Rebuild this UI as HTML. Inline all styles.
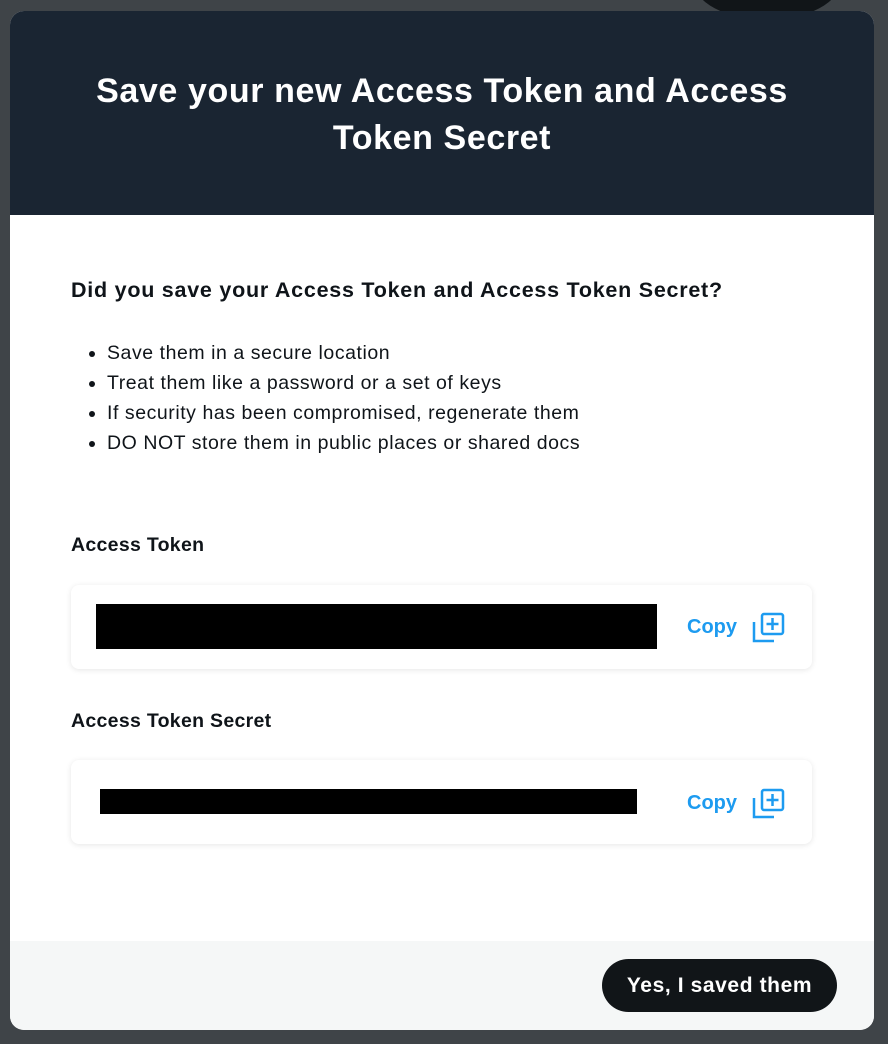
<!DOCTYPE html>
<html><head><style>
*{margin:0;padding:0;box-sizing:border-box}
body{width:888px;height:1044px;background:#3f4448;position:relative;overflow:hidden;font-family:"Liberation Sans",sans-serif;color:#0f1419}
.circ{position:absolute;left:693px;top:-60px;width:148px;height:80px;border-radius:50%;background:#111518}
.modal{position:absolute;left:10px;top:11px;width:864px;height:1019px;background:#fff;border-radius:14px;overflow:hidden}
.hd{height:204px;background:#1a2532;color:#fff;text-align:center;font-weight:bold;font-size:34px;letter-spacing:0.6px;line-height:47px;padding:57px 40px 0}
h2{position:absolute;left:61px;top:267px;font-size:21.5px;letter-spacing:0.75px;font-weight:bold;white-space:nowrap}
ul{position:absolute;left:97px;top:327px;font-size:19.5px;letter-spacing:0.55px;line-height:30px}
.lbl{position:absolute;left:61px;font-size:19.5px;letter-spacing:0.3px;font-weight:bold}
.card{position:absolute;left:61px;width:741px;height:84px;background:#fff;border-radius:8px;box-shadow:0 1px 6px rgba(0,0,0,.1)}
.bar{position:absolute;background:#000}
.copy{position:absolute;color:#1d9bf0;font-weight:bold;font-size:20px}
.ft{position:absolute;left:0;top:930px;width:864px;height:89px;background:#f5f7f7}
.btn{position:absolute;left:592px;top:948px;width:235px;height:53px;border-radius:27px;background:#111518;color:#fff;font-weight:bold;font-size:21px;letter-spacing:0.6px;text-align:center;line-height:53px}
</style></head><body>
<div class="circ"></div>
<div class="modal">
<div class="hd">Save your new Access Token and Access Token Secret</div>
<h2>Did you save your Access Token and Access Token Secret?</h2>
<ul><li>Save them in a secure location</li><li>Treat them like a password or a set of keys</li><li>If security has been compromised, regenerate them</li><li>DO NOT store them in public places or shared docs</li></ul>
<div class="lbl" style="top:523px">Access Token</div>
<div class="card" style="top:574px"><div class="bar" style="left:25px;top:19px;width:561px;height:45px"></div>
<div class="copy" style="left:616px;top:31px">Copy</div>
<svg style="position:absolute;left:681px;top:27px" width="34" height="32" viewBox="0 0 34 32" fill="none" stroke="#1d9bf0" stroke-width="2.5"><path d="M2 10v19h20"/><rect x="10" y="2" width="21" height="20" rx="2"/><path d="M20.5 6v12M14.5 12h12"/></svg>
</div>
<div class="lbl" style="top:699px">Access Token Secret</div>
<div class="card" style="top:749px"><div class="bar" style="left:29px;top:29px;width:537px;height:25px"></div>
<div class="copy" style="left:616px;top:32px">Copy</div>
<svg style="position:absolute;left:681px;top:28px" width="34" height="32" viewBox="0 0 34 32" fill="none" stroke="#1d9bf0" stroke-width="2.5"><path d="M2 10v19h20"/><rect x="10" y="2" width="21" height="20" rx="2"/><path d="M20.5 6v12M14.5 12h12"/></svg>
</div>
<div class="ft"></div>
<div class="btn">Yes, I saved them</div>
</div>
</body></html>
